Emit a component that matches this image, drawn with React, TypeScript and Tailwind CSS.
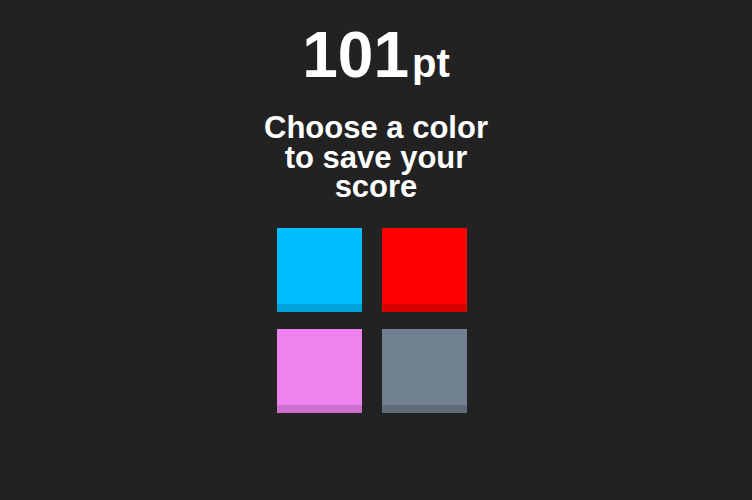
const colors = [
  { name: 'deepskyblue', cls: 'bg-[#00bfff] border-[#00a3d9]' },
  { name: 'red', cls: 'bg-[#ff0000] border-[#d90000]' },
  { name: 'violet', cls: 'bg-[#ee82ee] border-[#cb6fcb]' },
  { name: 'slategray', cls: 'bg-[#708090] border-[#5f6d7a]' }
]

export default function App() {
  return (
    <div
      className="flex h-[500px] w-full flex-col items-center bg-[#222222] text-white"
      style={{ fontFamily: '"Liberation Sans", Arial, sans-serif' }}
    >
      <div className="mt-[23px] font-bold leading-none">
        <span className="text-[64px]">101</span>
        <span className="ml-[3px] text-[40px]">pt</span>
      </div>

      <div className="mt-[26px] w-[240px] text-center text-[31px] font-bold leading-[29.5px]">
        Choose a color to save your score
      </div>

      <div className="mt-[26px] grid grid-cols-2 gap-x-5 gap-y-[17px] pr-[8px]">
        {colors.map(c => (
          <button
            key={c.name}
            className={`h-[84px] w-[85px] border-b-8 ${c.cls}`}
          />
        ))}
      </div>
    </div>
  )
}
